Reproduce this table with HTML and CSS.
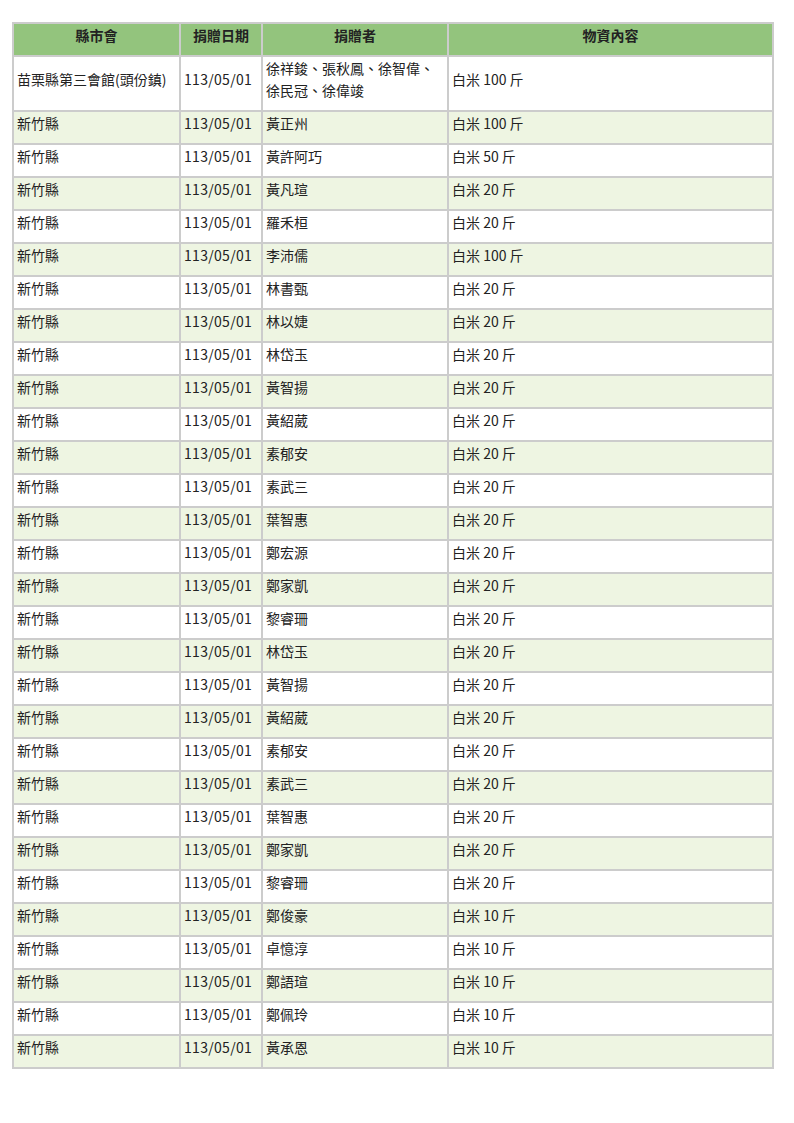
FILE: index.html
```html
<!DOCTYPE html>
<html lang="zh-Hant">
<head>
    <meta charset="UTF-8">
    <title>捐贈物資明細</title>
    <link rel="stylesheet" href="styles.css">
</head>
<body>
    <table class="list">
        <colgroup>
            <col class="c-area">
            <col class="c-date">
            <col class="c-donor">
            <col>
        </colgroup>
        <thead>
            <tr><th>縣市會</th><th>捐贈日期</th><th>捐贈者</th><th>物資內容</th></tr>
        </thead>
        <tbody>
            <tr class="first"><td>苗栗縣第三會館(頭份鎮)</td><td class="date">113/05/01</td><td>徐祥鋑、張秋鳳、徐智偉、徐民冠、徐偉竣</td><td>白米 100 斤</td></tr>
            <tr class="alt"><td>新竹縣</td><td class="date">113/05/01</td><td>黃正州</td><td>白米 100 斤</td></tr>
            <tr><td>新竹縣</td><td class="date">113/05/01</td><td>黃許阿巧</td><td>白米 50 斤</td></tr>
            <tr class="alt"><td>新竹縣</td><td class="date">113/05/01</td><td>黃凡瑄</td><td>白米 20 斤</td></tr>
            <tr><td>新竹縣</td><td class="date">113/05/01</td><td>羅禾桓</td><td>白米 20 斤</td></tr>
            <tr class="alt"><td>新竹縣</td><td class="date">113/05/01</td><td>李沛儒</td><td>白米 100 斤</td></tr>
            <tr><td>新竹縣</td><td class="date">113/05/01</td><td>林書甄</td><td>白米 20 斤</td></tr>
            <tr class="alt"><td>新竹縣</td><td class="date">113/05/01</td><td>林以婕</td><td>白米 20 斤</td></tr>
            <tr><td>新竹縣</td><td class="date">113/05/01</td><td>林岱玉</td><td>白米 20 斤</td></tr>
            <tr class="alt"><td>新竹縣</td><td class="date">113/05/01</td><td>黃智揚</td><td>白米 20 斤</td></tr>
            <tr><td>新竹縣</td><td class="date">113/05/01</td><td>黃紹葳</td><td>白米 20 斤</td></tr>
            <tr class="alt"><td>新竹縣</td><td class="date">113/05/01</td><td>素郁安</td><td>白米 20 斤</td></tr>
            <tr><td>新竹縣</td><td class="date">113/05/01</td><td>素武三</td><td>白米 20 斤</td></tr>
            <tr class="alt"><td>新竹縣</td><td class="date">113/05/01</td><td>葉智惠</td><td>白米 20 斤</td></tr>
            <tr><td>新竹縣</td><td class="date">113/05/01</td><td>鄭宏源</td><td>白米 20 斤</td></tr>
            <tr class="alt"><td>新竹縣</td><td class="date">113/05/01</td><td>鄭家凱</td><td>白米 20 斤</td></tr>
            <tr><td>新竹縣</td><td class="date">113/05/01</td><td>黎睿珊</td><td>白米 20 斤</td></tr>
            <tr class="alt"><td>新竹縣</td><td class="date">113/05/01</td><td>林岱玉</td><td>白米 20 斤</td></tr>
            <tr><td>新竹縣</td><td class="date">113/05/01</td><td>黃智揚</td><td>白米 20 斤</td></tr>
            <tr class="alt"><td>新竹縣</td><td class="date">113/05/01</td><td>黃紹葳</td><td>白米 20 斤</td></tr>
            <tr><td>新竹縣</td><td class="date">113/05/01</td><td>素郁安</td><td>白米 20 斤</td></tr>
            <tr class="alt"><td>新竹縣</td><td class="date">113/05/01</td><td>素武三</td><td>白米 20 斤</td></tr>
            <tr><td>新竹縣</td><td class="date">113/05/01</td><td>葉智惠</td><td>白米 20 斤</td></tr>
            <tr class="alt"><td>新竹縣</td><td class="date">113/05/01</td><td>鄭家凱</td><td>白米 20 斤</td></tr>
            <tr><td>新竹縣</td><td class="date">113/05/01</td><td>黎睿珊</td><td>白米 20 斤</td></tr>
            <tr class="alt"><td>新竹縣</td><td class="date">113/05/01</td><td>鄭俊豪</td><td>白米 10 斤</td></tr>
            <tr><td>新竹縣</td><td class="date">113/05/01</td><td>卓憶淳</td><td>白米 10 斤</td></tr>
            <tr class="alt"><td>新竹縣</td><td class="date">113/05/01</td><td>鄭語瑄</td><td>白米 10 斤</td></tr>
            <tr><td>新竹縣</td><td class="date">113/05/01</td><td>鄭佩玲</td><td>白米 10 斤</td></tr>
            <tr class="alt"><td>新竹縣</td><td class="date">113/05/01</td><td>黃承恩</td><td>白米 10 斤</td></tr>
        </tbody>
    </table>
</body>
</html>
```

FILE: styles.css
```css
body {
    margin: 22px 20px 0 12px;
    background: #fff;
    color: #222;
    font-family: "Noto Sans CJK TC", "Noto Sans", sans-serif;
    font-size: 14px;
}
.list {
    width: 762px;
    border-collapse: collapse;
    table-layout: fixed;
}
.c-area { width: 167px; }
.c-date { width: 82px; }
.c-donor { width: 186px; }
.list th,
.list td {
    border: 2px solid #cccccc;
    padding: 0 3px 9px;
    line-height: 22px;
    text-align: left;
    vertical-align: top;
}
.list th {
    background-color: #93c47d;
    font-weight: bold;
    text-align: center;
}
.list td.date {
    letter-spacing: 0.3px;
}
.list tr.first td {
    vertical-align: middle;
}
.list tr.alt td {
    background-color: #eef5e2;
}
```
